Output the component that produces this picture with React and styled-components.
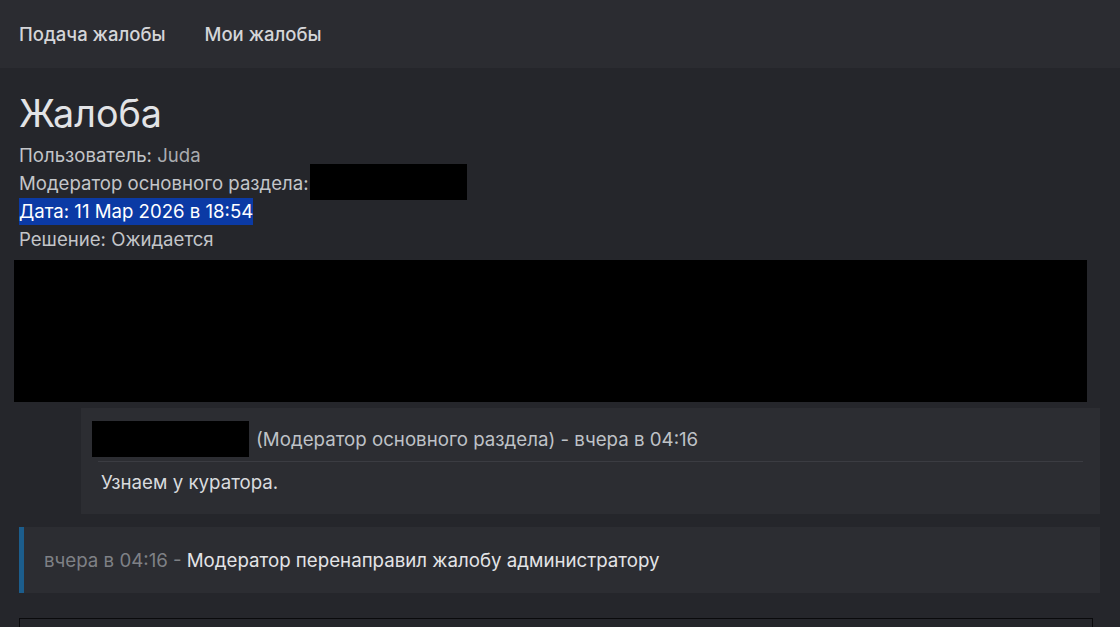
import React from 'react';
import styled, { createGlobalStyle } from 'styled-components';

const GlobalStyle = createGlobalStyle`
  html, body {
    margin: 0;
    padding: 0;
    background: #25262b;
    font-family: Inter, "Noto Sans", sans-serif;
    color: #c9cbcf;
  }
  #root {
    min-height: 100vh;
    overflow: hidden;
  }
`

const Nav = styled.nav`
  height: 68px;
  background: #2b2c31;
  display: flex;
  align-items: center;
  gap: 39px;
  padding: 0 19px;
  box-sizing: border-box;
`
const NavLink = styled.a`
  font-size: 18.5px;
  font-weight: 500;
  color: #d4d5d8;
  text-decoration: none;
  cursor: pointer;
`

const Main = styled.main`
  width: 1100px;
  padding: 23px 0 0 0;
  box-sizing: border-box;
`
const Title = styled.h1`
  margin: 0 0 0 19px;
  font-size: 37.7px;
  font-weight: 400;
  color: #e2e3e6;
  line-height: 44px;
`
const InfoList = styled.div`
  margin: 6px 0 0 19px;
  display: flex;
  flex-direction: column;
`
const InfoLine = styled.div`
  font-size: 18.6px;
  line-height: 28px;
  height: 28px;
  display: flex;
  align-items: center;
  color: #c3c5c9;
  span {
    background: ${(p) => (p.$selected ? '#0b3aa5' : 'transparent')};
    color: ${(p) => (p.$selected ? '#ffffff' : 'inherit')};
    line-height: 27px;
  }
`
const Value = styled.b`
  font-weight: 400;
  color: #a9abaf;
`
const Redact = styled.div`
  background: #000;
  width: ${(p) => p.$w}px;
  height: ${(p) => p.$h}px;
  flex-shrink: 0;
`
const InlineRedact = styled(Redact)`
  margin-left: 1px;
  margin-top: -2px;
`

const BigRedact = styled(Redact)`
  margin: 7px 0 0 14px;
`

const Comment = styled.section`
  margin: 6px 0 0 81px;
  background: #2c2d32;
  padding: 13px 17px 19px 11px;
`
const CommentHead = styled.div`
  display: flex;
  align-items: center;
  gap: 7px;
  font-size: 18.7px;
  color: #bfc2c7;
  padding-bottom: 4px;
  border-bottom: 1px solid #3b3c42;
  margin-left: 6px;
  & > div { margin-left: -6px; }
`
const CommentBody = styled.p`
  margin: 9px 0 0 9px;
  font-size: 18.7px;
  color: #d9dbde;
  line-height: 24px;
`

const Log = styled.div`
  margin: 13px 0 0 19px;
  height: 66px;
  background: #2c2d32;
  border-left: 5px solid #1c5d8c;
  display: flex;
  align-items: center;
  padding-left: 20px;
  font-size: 18.7px;
  color: #e3e4e7;
`
const LogTime = styled.span`
  color: #7f8186;
  margin-right: 5px;
`

const Editor = styled.div`
  margin: 25px 0 0 19px;
  width: 1074px;
  height: 60px;
  border: 1px solid #0a0a0c;
  box-sizing: border-box;
`

export default function App() {
  return (
    <>
      <GlobalStyle />
      <Nav>
        <NavLink>Подача жалобы</NavLink>
        <NavLink>Мои жалобы</NavLink>
      </Nav>
      <Main>
        <Title>Жалоба</Title>
        <InfoList>
          <InfoLine>Пользователь:&nbsp;<Value>Juda</Value></InfoLine>
          <InfoLine>
            Модератор основного раздела:
            <InlineRedact $w={157} $h={36} />
          </InfoLine>
          <InfoLine $selected><span>Дата: 11 Мар 2026 в 18:54</span></InfoLine>
          <InfoLine>Решение: Ожидается</InfoLine>
        </InfoList>
        <BigRedact $w={1073} $h={142} />
        <Comment>
          <CommentHead>
            <Redact $w={157} $h={36} />
            (Модератор основного раздела) - вчера в 04:16
          </CommentHead>
          <CommentBody>Узнаем у куратора.</CommentBody>
        </Comment>
        <Log>
          <LogTime>вчера в 04:16 -</LogTime>
          Модератор перенаправил жалобу администратору
        </Log>
        <Editor />
      </Main>
    </>
  );
}
